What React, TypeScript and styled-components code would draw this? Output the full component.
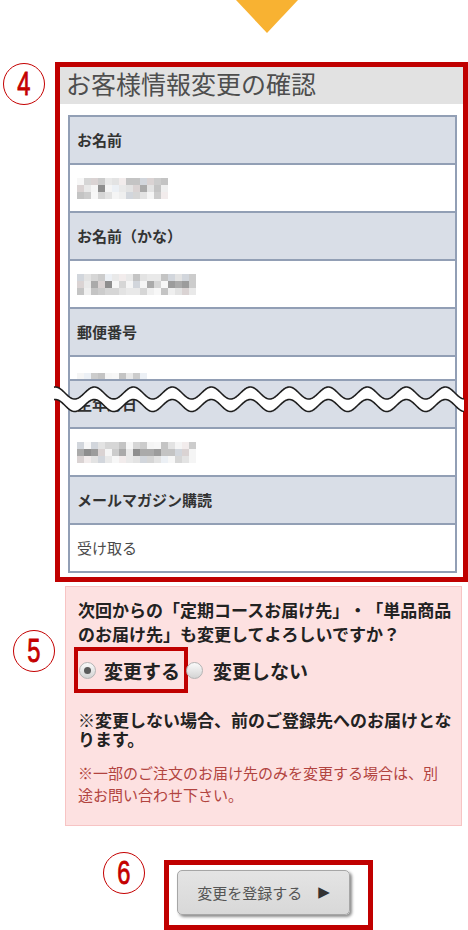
import React from 'react';
import styled, { createGlobalStyle } from 'styled-components';

const GlobalStyle = createGlobalStyle`
    html, body {
        margin : 0;
        padding : 0;
        background : #FFFFFF;
    }
    body {
        font-family : "Noto Sans CJK JP", "Liberation Sans", sans-serif;
        color : #333333;
        text-spacing-trim : space-all;
    }
    * {
        box-sizing : border-box;
    }
`

const Page = styled.div`
    position : relative;
    width : 468px;
    height : 930px;
    overflow : hidden;
`

const Arrow = styled.div`
    width : 0;
    height : 0;
    margin-left : 236px;
    border-left : 31px solid transparent;
    border-right : 31px solid transparent;
    border-top : 33px solid #F8B232;
`

const Row = styled.div<{ $top: number }>`
    display : flex;
    align-items : flex-start;
    margin-top : ${(props) => props.$top}px;
`

const Marker = styled.div<{ $left: number; $top?: number }>`
    flex : none;
    width : 42px;
    height : 42px;
    margin-left : ${(props) => props.$left}px;
    margin-top : ${(props) => props.$top || 0}px;
    border : 1.5px solid #C40000;
    border-radius : 50%;
    display : flex;
    align-items : center;
    justify-content : center;
    color : #C40000;
`

const Digit = styled.span`
    display : inline-block;
    font-family : "Liberation Sans", "DejaVu Sans", sans-serif;
    font-size : 32px;
    font-weight : 400;
    line-height : 1;
    transform : scale(0.74, 1.04);
    margin-top : -1px;
    -webkit-text-stroke : 0.8px #C40000;
`

const RedFrame = styled.div<{ $left: number; $top?: number; $width: number; $height?: number }>`
    position : relative;
    flex : none;
    width : ${(props) => props.$width}px;
    ${(props) => props.$height ? `height : ${props.$height}px;` : ''}
    margin-left : ${(props) => props.$left}px;
    margin-top : ${(props) => props.$top || 0}px;
    border : 5px solid #C00000;
`

const Title = styled.div`
    height : 37px;
    padding : 0 0 4px 6px;
    background : #E2E2E2;
    color : #4E4E4E;
    font-size : 25px;
    line-height : 33px;
    white-space : nowrap;
`

const Table = styled.div`
    margin : 11px 6px 4px 8px;
    border : 2px solid #929FB5;
    border-bottom : none;
`

const Cell = styled.div<{ $head?: boolean; $height?: number }>`
    height : ${(props) => (props.$height || 46) + 2}px;
    display : flex;
    align-items : center;
    padding-left : 7px;
    overflow : hidden;
    background : ${(props) => props.$head ? '#D9DEE7' : '#FFFFFF'};
    border-bottom : 2px solid #929FB5;
    font-size : 15px;
    font-weight : ${(props) => props.$head ? 700 : 400};
    color : ${(props) => props.$head ? '#333333' : '#4A4A4A'};
    line-height : 20px;
`

const CutCell = styled(Cell)`
    align-items : flex-start;
    padding-top : 16px;
`

const MosaicGrid = styled.span<{ $cols: number }>`
    display : grid;
    grid-template-columns : repeat(${(props) => props.$cols}, 7px);
    grid-auto-rows : 7px;
`

const Pixel = styled.span<{ $c: string }>`
    background : ${(props) => props.$c};
`

const Wave = styled.svg`
    position : absolute;
    left : -6px;
    top : 316px;
    overflow : visible;
`

const PinkBox = styled.div`
    flex : none;
    width : 397px;
    margin-left : 10px;
    padding : 11px 5px 19px 12px;
    background : #FDE1E1;
    border : 1px solid #F7C4C4;
`

const Question = styled.p`
    margin : 0;
    font-size : 17px;
    font-weight : 700;
    line-height : 24px;
    color : #222222;
`

const Choices = styled.div`
    display : flex;
    align-items : center;
    margin-top : 1px;
    height : 46px;
`

const Choice = styled.label<{ $picked?: boolean }>`
    display : flex;
    align-items : center;
    gap : ${(props) => props.$picked ? 8 : 10}px;
    height : 46px;
    margin-left : ${(props) => props.$picked ? -4 : -2}px;
    padding : ${(props) => props.$picked ? '0 4px 0 1px' : '0'};
    border : ${(props) => props.$picked ? '4px solid #C00000' : 'none'};
    font-size : 19px;
    font-weight : 700;
    color : #222222;
    line-height : 1;
`

const RadioDot = styled.span<{ $checked?: boolean }>`
    position : relative;
    flex : none;
    width : 17px;
    height : 17px;
    border-radius : 50%;
    border : 1px solid #B4B4B4;
    background : linear-gradient(#FAFAFA, #D4D4D4);
    &::after {
        content : '';
        display : ${(props) => props.$checked ? 'block' : 'none'};
        position : absolute;
        left : 4px;
        top : 4px;
        width : 7px;
        height : 7px;
        border-radius : 50%;
        background : #5A5A5A;
    }
`

const Note = styled.p`
    margin : 17px 0 0;
    font-size : 17px;
    font-weight : 700;
    line-height : 19px;
    color : #222222;
`

const SmallNote = styled.p`
    margin : 14px 0 0;
    max-width : 370px;
    font-size : 15px;
    line-height : 22px;
    color : #B2443F;
`

const Button = styled.button`
    display : flex;
    align-items : center;
    justify-content : center;
    gap : 16px;
    width : 173px;
    height : 45px;
    margin : 5px 0 0 8px;
    padding : 0 0 1px;
    border : 1px solid #A6A6A6;
    border-radius : 5px;
    background : linear-gradient(#E4E4E4, #D8D8D8);
    box-shadow : 2px 2px 3px rgba(0, 0, 0, 0.45);
    font-family : "Noto Sans CJK JP", "Liberation Sans", sans-serif;
    font-size : 15px;
    color : #555555;
`

const Play = styled.span`
    font-size : 15px;
    line-height : 1;
    color : #333333;
    font-family : "DejaVu Sans", sans-serif;
`

const PALETTE = [
    ['#F5F5F5', '#EFEFEF', '#E9E9E9', '#F2ECEC', '#ECF0F5', '#E3E3E3', '#F7F7F7'],
    ['#D6D6D6', '#CCCCCC', '#C4C4C4', '#DAD3D3', '#D2D6DC'],
    ['#9C9C9C', '#8E8E8E', '#AAAAAA'],
]

const mosaic = (seed: number, cols: number) => {
    let s = seed;
    const rand = () => {
        s = (s * 9301 + 49297) % 233280;
        return s / 233280;
    };
    const cells: string[] = [];
    for (let r = 0; r < 3; r++) {
        for (let c = 0; c < cols; c++) {
            const v = rand();
            let tone = 0;
            if (r === 1) tone = v < 0.35 ? 2 : v < 0.7 ? 1 : 0;
            else tone = v < 0.45 ? 1 : 0;
            const list = PALETTE[tone];
            cells.push(list[Math.floor(rand() * list.length)]);
        }
    }
    return cells;
}

const Mosaic = ({ seed, cols }: { seed: number; cols: number }) => (
    <MosaicGrid $cols={cols}>
        {mosaic(seed, cols).map((c, i) => <Pixel key={i} $c={c} />)}
    </MosaicGrid>
)

const wavePath = (base: number, width: number) => {
    const pts: string[] = [];
    for (let x = 0; x <= width; x += 1) {
        const y = base + 6 * Math.sin((2 * Math.PI * (x + 28)) / 39);
        pts.push(`${x},${y.toFixed(2)}`);
    }
    return pts;
}

const BreakWave = () => {
    const w = 410;
    const top = wavePath(10, w);
    const bottom = wavePath(22.5, w);
    const fill = `M${top.join(' L')} L${[...bottom].reverse().join(' L')} Z`;
    return (
        <Wave width={w} height={32} viewBox={`0 0 ${w} 32`}>
            <path d={fill} fill="#FFFFFF" />
            <path d={`M${top.join(' L')}`} fill="none" stroke="#1E1E1E" strokeWidth={1.6} />
            <path d={`M${bottom.join(' L')}`} fill="none" stroke="#1E1E1E" strokeWidth={1.6} />
        </Wave>
    )
}

const App = () => {
    return (
        <Page>
            <GlobalStyle />
            <Arrow />

            <Row $top={29}>
                <Marker $left={3} $top={1}><Digit>4</Digit></Marker>
                <RedFrame $left={10} $width={413}>
                    <Title>お客様情報変更の確認</Title>
                    <Table>
                        <Cell $head>お名前</Cell>
                        <Cell><Mosaic seed={11} cols={13} /></Cell>
                        <Cell $head>お名前（かな）</Cell>
                        <Cell><Mosaic seed={47} cols={17} /></Cell>
                        <Cell $head>郵便番号</Cell>
                        <CutCell $height={22}><Mosaic seed={83} cols={10} /></CutCell>
                        <Cell $head>生年月日</Cell>
                        <Cell><Mosaic seed={29} cols={17} /></Cell>
                        <Cell $head>メールマガジン購読</Cell>
                        <Cell>受け取る</Cell>
                    </Table>
                    <BreakWave />
                </RedFrame>
            </Row>

            <Row $top={4}>
                <Marker $left={13} $top={44}><Digit>5</Digit></Marker>
                <PinkBox>
                    <Question>次回からの「定期コースお届け先」・「単品商品のお届け先」も変更してよろしいですか？</Question>
                    <Choices>
                        <Choice $picked>
                            <RadioDot $checked />
                            変更する
                        </Choice>
                        <Choice>
                            <RadioDot />
                            変更しない
                        </Choice>
                    </Choices>
                    <Note>※変更しない場合、前のご登録先へのお届けとなります。</Note>
                    <SmallNote>※一部のご注文のお届け先のみを変更する場合は、別途お問い合わせ下さい。</SmallNote>
                </PinkBox>
            </Row>

            <Row $top={26}>
                <Marker $left={103}><Digit>6</Digit></Marker>
                <RedFrame $left={19} $top={8} $width={209} $height={70}>
                    <Button type="button">
                        変更を登録する
                        <Play>▶</Play>
                    </Button>
                </RedFrame>
            </Row>
        </Page>
    )
}

export default App;
